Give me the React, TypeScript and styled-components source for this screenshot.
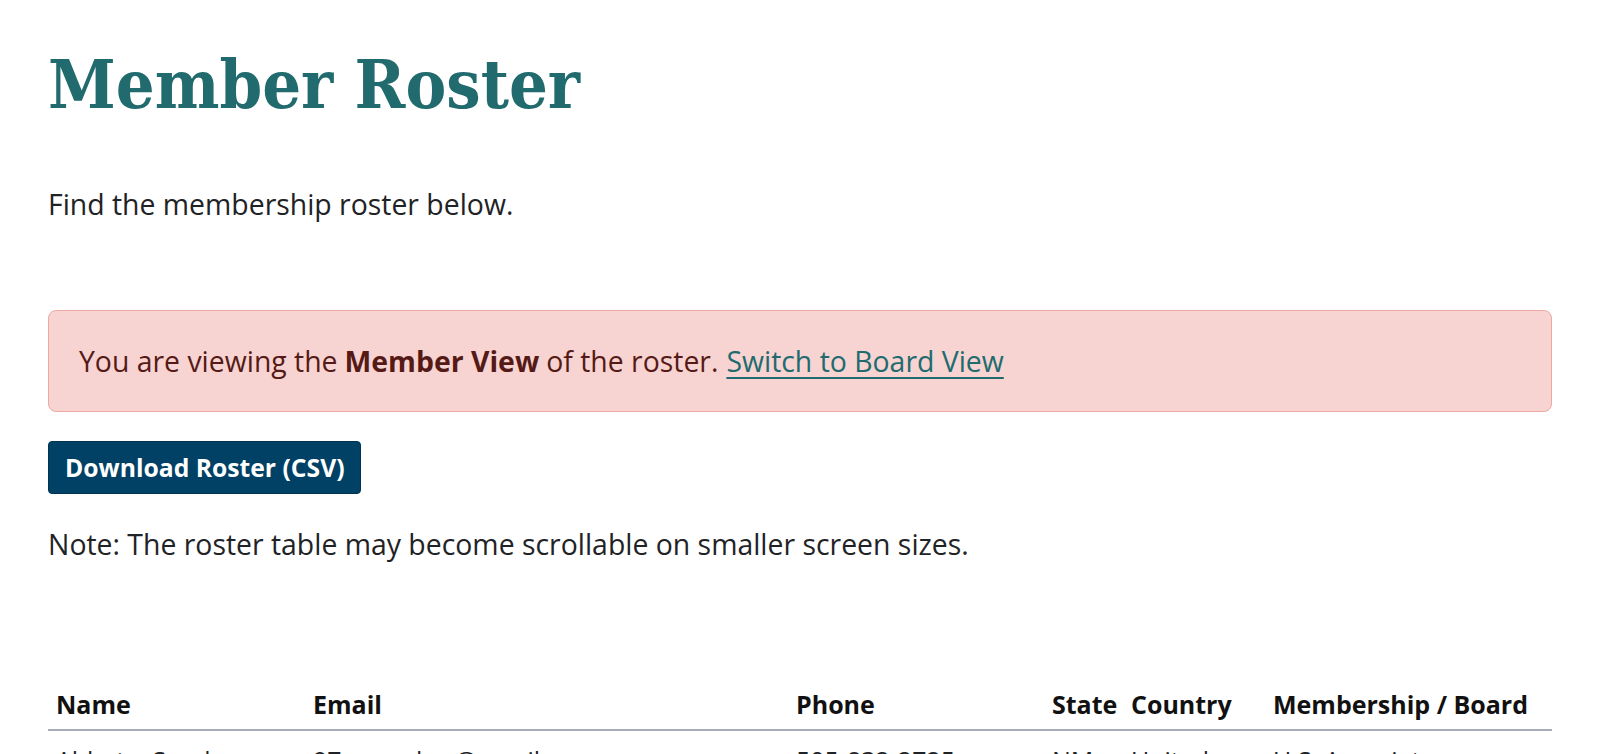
import React from "react";
import styled, { createGlobalStyle } from "styled-components";

const Global = createGlobalStyle`
  html, body { margin: 0; padding: 0; background: #ffffff; }
  body { font-family: "Open Sans", "Noto Sans", sans-serif; color: #1f1f1f; }
  * { box-sizing: border-box; }
`;

const Page = styled.main`
  padding: 40px 48px 0 48px;
  display: flex;
  flex-direction: column;
`;

const Title = styled.h1`
  margin: 0;
  font-family: "DejaVu Serif Condensed", "DejaVu Serif", serif;
  font-stretch: condensed;
  font-weight: 700;
  font-size: 68px;
  line-height: 88px;
  color: #216b6e;
  letter-spacing: 0;
`;

const Lead = styled.p`
  margin: 56px 0 0;
  font-size: 28.4px;
  line-height: 40px;
  color: #1f2326;
`;

const Alert = styled.div`
  margin-top: 86px;
  height: 102px;
  display: flex;
  align-items: center;
  padding: 0 30px;
  background: #f7d4d2;
  border: 1px solid #eea8a2;
  border-radius: 8px;
  font-size: 28.4px;
  color: #561a16;
`;

const Strong = styled.strong`
  font-weight: 700;
  margin: 0 7px;
`;

const Link = styled.a`
  color: #216b6e;
  text-decoration: underline;
  text-underline-offset: 5px;
  margin-left: 8px;
`;

const Button = styled.button`
  margin-top: 29px;
  align-self: flex-start;
  height: 53px;
  padding: 0 15px 0 16px;
  border: 1px solid #003452;
  border-radius: 4px;
  background: #004165;
  color: #ffffff;
  font-family: "Open Sans", sans-serif;
  font-weight: 700;
  font-size: 24.7px;
  cursor: pointer;
`;

const Note = styled.p`
  margin: 30px 0 0;
  font-size: 28.4px;
  line-height: 40px;
  color: #1f2326;
`;

const Table = styled.table`
  margin-top: 119px;
  width: 100%;
  border-collapse: collapse;
  table-layout: fixed;
  font-size: 25px;
`;

const Col = styled.col<{ $w: number }>`
  width: ${(p) => p.$w}px;
`;

const Th = styled.th`
  text-align: left;
  font-weight: 700;
  color: #111111;
  padding: 4px 8px 8px;
  line-height: 34px;
  border-bottom: 2px solid #a4adb8;
  white-space: nowrap;
`;

const Td = styled.td`
  padding: 12px 8px;
  line-height: 34px;
  color: #1f2326;
  vertical-align: top;
`;

const rows = [
  ["Abbate, Sandra", "97rosembm@gmail.com", "505-832-2725", "NM", "United States", "U.S. Associate"],
  ["Abbott, Karen", "kabbott@example.org", "303-555-0142", "CO", "United States", "U.S. Member"],
];

export default function App() {
  return (
    <>
      <Global />
      <Page>
        <Title>Member Roster</Title>
        <Lead>Find the membership roster below.</Lead>
        <Alert>
          You are viewing the<Strong>Member View</Strong>of the roster.
          <Link href="#">Switch to Board View</Link>
        </Alert>
        <Button>Download Roster (CSV)</Button>
        <Note>Note: The roster table may become scrollable on smaller screen sizes.</Note>
        <Table>
          <colgroup>
            <Col $w={257} />
            <Col $w={483} />
            <Col $w={256} />
            <Col $w={79} />
            <Col $w={142} />
            <Col $w={287} />
          </colgroup>
          <thead>
            <tr>
              <Th>Name</Th>
              <Th>Email</Th>
              <Th>Phone</Th>
              <Th>State</Th>
              <Th>Country</Th>
              <Th>Membership / Board</Th>
            </tr>
          </thead>
          <tbody>
            {rows.map((r) => (
              <tr key={r[0]}>
                {r.map((c, i) => (
                  <Td key={i}>{c}</Td>
                ))}
              </tr>
            ))}
          </tbody>
        </Table>
      </Page>
    </>
  );
}
